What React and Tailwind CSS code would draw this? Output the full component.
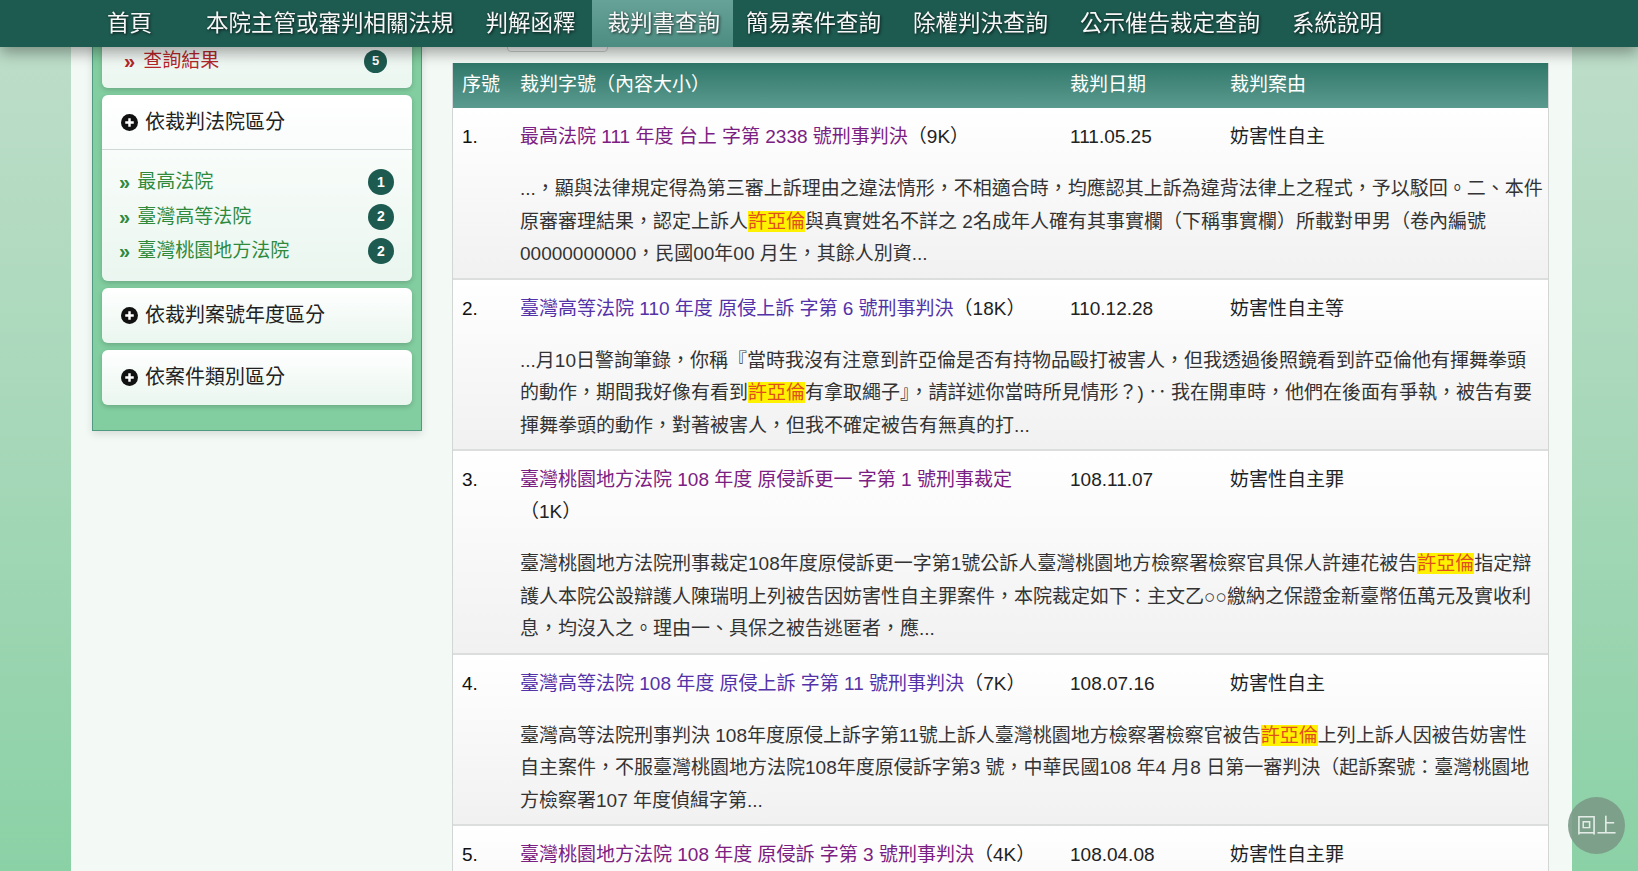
import React from 'react';

const navItems = ['首頁', '本院主管或審判相關法規', '判解函釋', '裁判書查詢', '簡易案件查詢', '除權判決查詢', '公示催告裁定查詢', '系統說明'];

const courts = [
    { name: '最高法院', count: 1 },
    { name: '臺灣高等法院', count: 2 },
    { name: '臺灣桃園地方法院', count: 2 },
];

const results = [
    {
        no: '1.',
        title: '最高法院 111 年度 台上 字第 2338 號刑事判決',
        size: '9K',
        visited: true,
        date: '111.05.25',
        reason: '妨害性自主',
        before: '...，顯與法律規定得為第三審上訴理由之違法情形，不相適合時，均應認其上訴為違背法律上之程式，予以駁回。二、本件原審審理結果，認定上訴人',
        after: '與真實姓名不詳之 2名成年人確有其事實欄（下稱事實欄）所載對甲男（卷內編號00000000000，民國00年00 月生，其餘人別資...',
    },
    {
        no: '2.',
        title: '臺灣高等法院 110 年度 原侵上訴 字第 6 號刑事判決',
        size: '18K',
        visited: false,
        date: '110.12.28',
        reason: '妨害性自主等',
        before: '...月10日警詢筆錄，你稱『當時我沒有注意到許亞倫是否有持物品毆打被害人，但我透過後照鏡看到許亞倫他有揮舞拳頭的動作，期間我好像有看到',
        after: (
            <>
                有拿取繩子』，請詳述你當時所見情形？)<span className="mx-[4px]">‥</span>我在開車時，他們在後面有爭執，被告有要揮舞拳頭的動作，對著被害人，但我不確定被告有無真的打...
            </>
        ),
    },
    {
        no: '3.',
        title: '臺灣桃園地方法院 108 年度 原侵訴更一 字第 1 號刑事裁定',
        size: '1K',
        visited: true,
        date: '108.11.07',
        reason: '妨害性自主罪',
        before: '臺灣桃園地方法院刑事裁定108年度原侵訴更一字第1號公訴人臺灣桃園地方檢察署檢察官具保人許連花被告',
        after: '指定辯護人本院公設辯護人陳瑞明上列被告因妨害性自主罪案件，本院裁定如下：主文乙○○繳納之保證金新臺幣伍萬元及實收利息，均沒入之。理由一、具保之被告逃匿者，應...',
    },
    {
        no: '4.',
        title: '臺灣高等法院 108 年度 原侵上訴 字第 11 號刑事判決',
        size: '7K',
        visited: false,
        date: '108.07.16',
        reason: '妨害性自主',
        before: '臺灣高等法院刑事判決 108年度原侵上訴字第11號上訴人臺灣桃園地方檢察署檢察官被告',
        after: '上列上訴人因被告妨害性自主案件，不服臺灣桃園地方法院108年度原侵訴字第3 號，中華民國108 年4 月8 日第一審判決（起訴案號：臺灣桃園地方檢察署107 年度偵緝字第...',
    },
    {
        no: '5.',
        title: '臺灣桃園地方法院 108 年度 原侵訴 字第 3 號刑事判決',
        size: '4K',
        visited: true,
        date: '108.04.08',
        reason: '妨害性自主罪',
        before: '臺灣桃園地方法院刑事判決 108年度原侵訴字第3號公訴人臺灣桃園地方檢察署檢察官被告',
        after: '上列被告因妨害性自主案件...',
    },
];

// black disc with a white plus
const PlusCircle = () => (
    <svg width="17" height="17" viewBox="0 0 18 18" className="shrink-0">
        <circle cx="9" cy="9" r="9" fill="#111" />
        <path d="M9 4.5v9M4.5 9h9" stroke="#fff" strokeWidth="2.6" />
    </svg>
);

const Badge = ({ n, small }) => (
    <span className={`flex items-center justify-center rounded-full bg-[#1d5a50] text-white font-bold ${small ? 'w-[23px] h-[23px] text-[13px]' : 'w-[26px] h-[26px] text-[14px]'}`}>
        {n}
    </span>
);

const cardCls = 'rounded-[6px] bg-gradient-to-b from-white to-[#eaf6ef] shadow-[0_2px_5px_rgba(0,0,0,0.18)]';

const FilterCard = ({ label }) => (
    <div className={`${cardCls} h-[55px] flex items-center gap-[7px] pl-[19px] text-[20px] text-[#222]`}>
        <PlusCircle />
        <span>{label}</span>
    </div>
);

const App = () => {
    return (
        <div className="relative h-screen overflow-hidden bg-gradient-to-b from-[#c0decb] to-[#8bd1a6] font-['Liberation_Sans','Noto_Sans_CJK_TC',sans-serif]">
            {/* TOP NAV */}
            <nav className="fixed top-0 inset-x-0 z-20 h-[47px] bg-[#1d5a50] shadow-[0_6px_14px_rgba(0,0,0,0.35)] flex items-stretch pl-[91px]">
                {navItems.map((item, i) => (
                    <a
                        key={item}
                        className={`flex items-center px-4 text-[22.5px] text-[#f7f7f7] [text-shadow:1px_1px_3px_rgba(0,0,0,0.75)] ${i === 0 ? 'mr-[22px]' : ''} ${item === '裁判書查詢' ? 'bg-gradient-to-b from-[#67a298] to-[#4c8c81] pr-[13px] mr-[-3px]' : ''}`}
                    >
                        {item}
                    </a>
                ))}
            </nav>

            <div className="ml-[71px] w-[1501px] min-h-full bg-[#f3f9f5] flex items-start pl-[21px] pr-[23px]">
                {/* SIDEBAR */}
                <aside className="w-[330px] shrink-0 border border-[#4f9a80] border-t-0 bg-[#82cea0] px-[9px] pb-[25px] flex flex-col gap-[7px] shadow-[0_3px_8px_rgba(0,0,0,0.12)]">
                    <div className={`${cardCls} rounded-t-none pt-[45px] pb-[11px] pl-[22px] pr-[25px] flex items-center justify-between`}>
                        <span className="flex items-center gap-[8px] text-[19px] leading-[32px] text-[#b5262a]">
                            <span className="text-[20px] font-bold">»</span>查詢結果
                        </span>
                        <Badge n={5} small />
                    </div>

                    <div className={cardCls}>
                        <div className="h-[55px] flex items-center gap-[7px] pl-[19px] text-[20px] text-[#222] border-b border-[#d0d8d3]">
                            <PlusCircle />
                            <span>依裁判法院區分</span>
                        </div>
                        <ul className="pt-[15px] pb-[12px] pl-[17px] pr-[18px]">
                            {courts.map(c => (
                                <li key={c.name} className="h-[34.5px] flex items-center justify-between">
                                    <span className="flex items-center gap-[7px] text-[19px] text-[#2f8a3c]">
                                        <span className="text-[20px] font-bold">»</span>{c.name}
                                    </span>
                                    <Badge n={c.count} />
                                </li>
                            ))}
                        </ul>
                    </div>

                    <FilterCard label="依裁判案號年度區分" />
                    <FilterCard label="依案件類別區分" />
                </aside>

                {/* RESULTS */}
                <main className="ml-[30px] w-[1098px] pt-[12px]">
                    <div className="ml-[55px] w-[101px] h-[40px] border border-[#c9cfcb] rounded-b-[4px] bg-[#f7f9f8]" />

                    <div className="mt-[11px] border-x border-[#d2d6d4] bg-white">
                        <div className="h-[45px] grid grid-cols-[58px_550px_160px_1fr] items-center pl-[9px] pr-[4px] bg-gradient-to-b from-[#2f776a] to-[#5b9b8f] text-white text-[19px]">
                            <span>序號</span>
                            <span>裁判字號（內容大小）</span>
                            <span>裁判日期</span>
                            <span>裁判案由</span>
                        </div>

                        {results.map(r => (
                            <div key={r.no} className="grid grid-cols-[58px_550px_160px_1fr] pl-[9px] pr-[4px] pt-[13px] pb-[7px] border-b-2 border-[#dcdedd] bg-gradient-to-b from-white to-[#f1f1f1] text-[19px]">
                                <span className="leading-[32px] text-[#111]">{r.no}</span>
                                <span className="leading-[32px] pr-[12px]">
                                    <a className={r.visited ? 'text-[#7b2082]' : 'text-[#5432a8]'}>{r.title}</a>
                                    <span className="text-[#222]">（{r.size}）</span>
                                </span>
                                <span className="leading-[32px] text-[#222]">{r.date}</span>
                                <span className="leading-[32px] text-[#222]">{r.reason}</span>
                                <p className="col-start-2 col-span-3 w-[1024px] mt-[20px] leading-[32.5px] text-[#333]">
                                    {r.before}
                                    <span className="bg-[#fff200] text-[#e0501c]">許亞倫</span>
                                    {r.after}
                                </p>
                            </div>
                        ))}
                    </div>
                </main>
            </div>

            {/* BACK TO TOP */}
            <button className="fixed right-[13px] bottom-[17px] z-30 w-[57px] h-[57px] rounded-full bg-[#7b9a87]/90 text-[#e3ece6] text-[20px] flex items-center justify-center">
                回上
            </button>
        </div>
    );
};

export default App;
